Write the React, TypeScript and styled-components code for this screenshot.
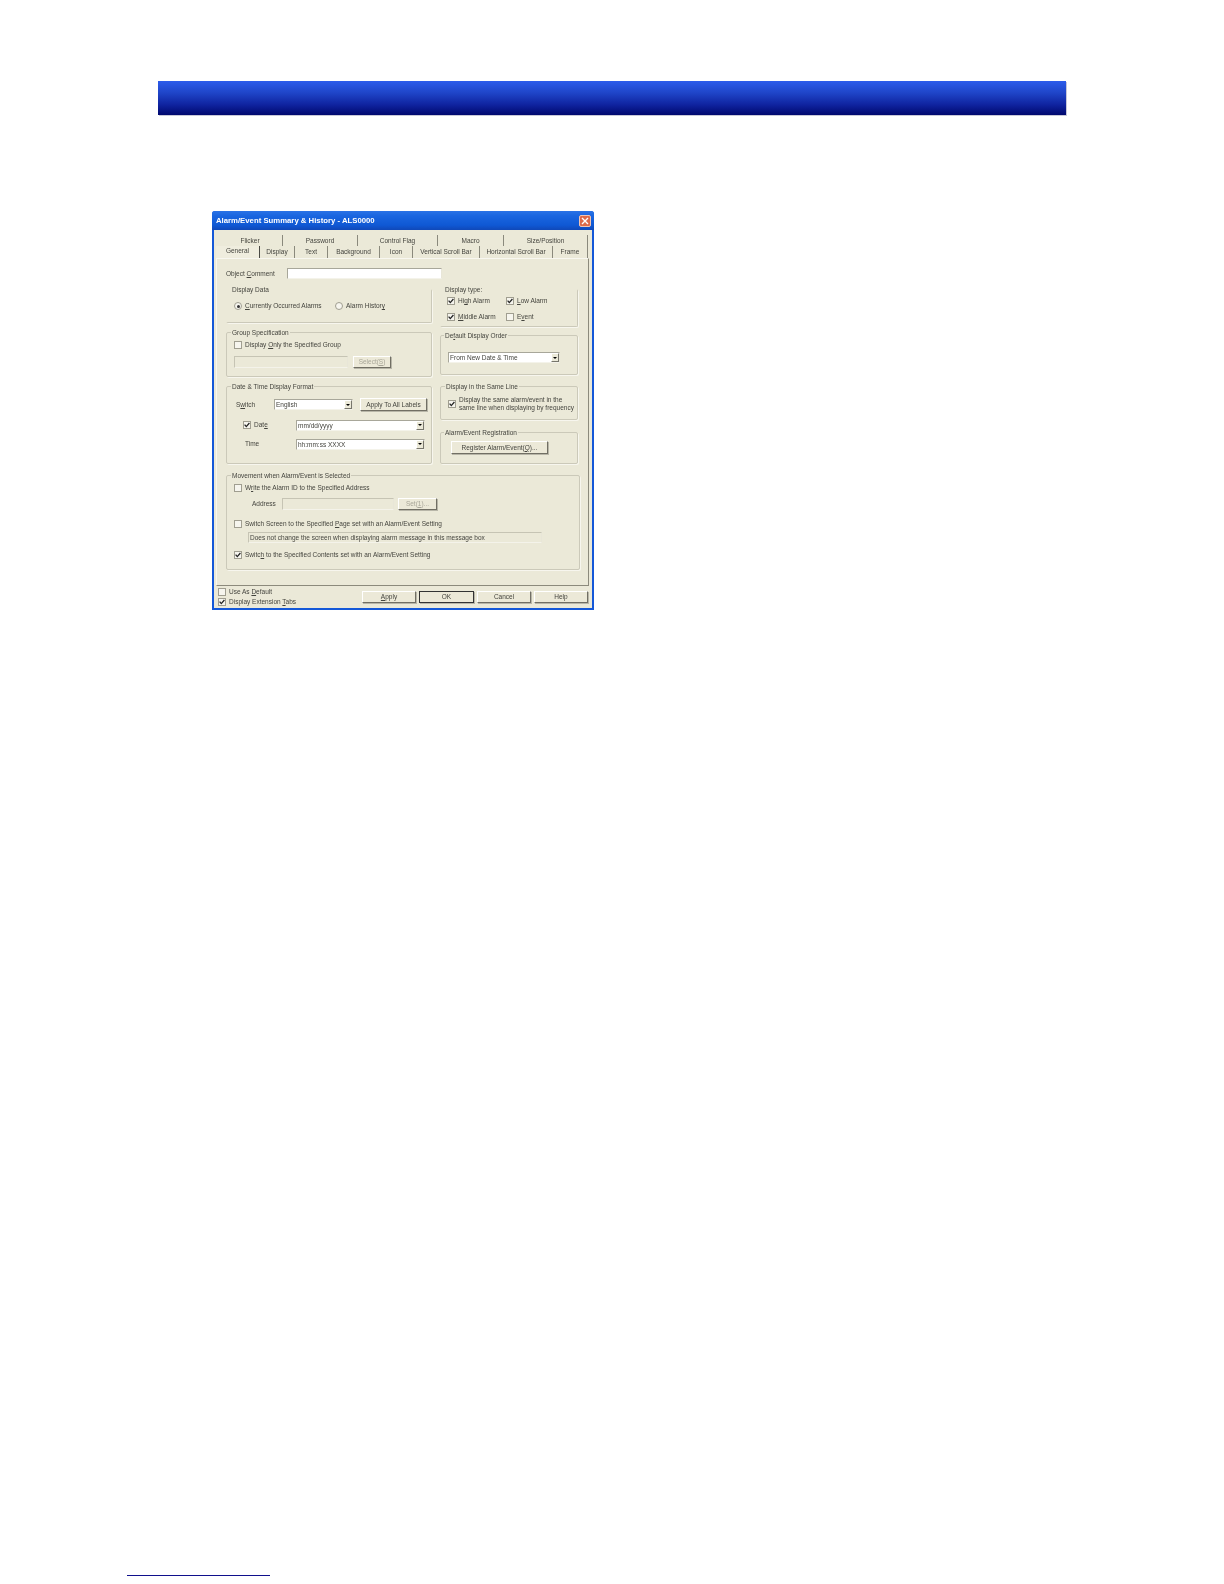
import React from "react";
import styled, { createGlobalStyle } from "styled-components";

const Global = createGlobalStyle`
  html, body { margin: 0; padding: 0; background: #fff; }
  * { box-sizing: border-box; }
`;

const Page = styled.div`
  width: 1224px; height: 1584px; display: flex; flex-direction: column; background: #fff;
  font-family: "Liberation Sans", Arial, sans-serif;
`;
const Banner = styled.div`
  width: 908px; height: 34px; margin: 81px 0 0 158px; flex: none;
  background: linear-gradient(#2c5ceb 0%, #1f45c8 35%, #0f239f 70%, #00086e 100%);
  box-shadow: 1px 1px 0 #c8c8d8;
`;
const Dialog = styled.div`
  width: 382px; height: 399px; margin: 96px 0 0 212px; flex: none;
  display: flex; flex-direction: column;
  background: #1458d8; border-radius: 3px 3px 0 0; padding: 0 2px 2px;
  filter: blur(0.45px);
  font-size: 6.5px; color: #44443e; line-height: 10px;
`;
const TitleBar = styled.div`
  height: 19px; margin: 0 -2px; padding: 0 3px 0 4px; display: flex; align-items: center; justify-content: space-between;
  background: linear-gradient(#2a72e6, #1a66e0 25%, #0f58d4 75%, #1048b8);
  border-radius: 3px 3px 0 0; color: #fff; font-weight: 700; font-size: 7.75px;
`;
const Close = styled.div`
  width: 12px; height: 12px; background: #dd6a48; border: 1px solid #f2c4b2; border-radius: 2px;
  display: flex; align-items: center; justify-content: center;
`;
const Body = styled.div`
  flex: 1; background: #ebe9d8; padding: 5px 3px 0 2px; display: flex; flex-direction: column; min-height: 0;
`;
const TabRow = styled.div<{ $indent: number; $h: number }>`
  display: flex; height: ${p => p.$h}px; flex: none; padding-left: ${p => p.$indent}px; align-items: center;
`;
const Tab = styled.div<{ $w: number; $active?: boolean }>`
  width: ${p => p.$w}px; height: 100%; text-align: center; line-height: 11px; white-space: nowrap;
  border-right: 1px solid ${p => (p.$active ? "#4a4a44" : "#8a897c")};
  ${p => p.$active && "background:#efedde; line-height: 9px;"}
`;
const Panel = styled.div`
  width: 373px; height: 328px; flex: none; border: 1px solid #f8f7f0; border-right-color: #8c8a7c; border-bottom-color: #8c8a7c;
  background: #ebe9d8; padding: 9px 0 0 9px; display: flex; flex-direction: column;
`;
const CommentRow = styled.div`
  display: flex; align-items: center; height: 11px; flex: none;
`;
const LabelCell = styled.span<{ $w: number; $pad?: number }>`
  width: ${p => p.$w}px; padding-left: ${p => p.$pad ?? 0}px; flex: none; white-space: nowrap;
`;
const Field = styled.div<{ $w: number; $h?: number; $off?: boolean; $ml?: number }>`
  width: ${p => p.$w}px; height: ${p => p.$h ?? 11}px; flex: none; overflow: hidden; white-space: nowrap;
  margin-left: ${p => p.$ml ?? 0}px;
  background: ${p => (p.$off ? "#ebe9d8" : "#fff")};
  border: 1px solid ${p => (p.$off ? "#c6c4b4" : "#a8a79a")};
  border-right-color: #e8e6d8; border-bottom-color: #f4f3ea;
  padding-left: 1px; line-height: 9px;
  display: flex; justify-content: space-between; align-items: center;
`;
const Arrow = styled.span`
  width: 8px; height: 9px; flex: none; background: #ebe9d8; border: 1px solid #fff; border-right-color: #77766c; border-bottom-color: #77766c;
  display: flex; align-items: center; justify-content: center;
  &::after { content: ""; border: 2px solid transparent; border-top: 2.5px solid #000; border-bottom: 0; }
`;
const Columns = styled.div`
  display: flex; gap: 8px; margin-top: 6px; flex: none;
`;
const Column = styled.div<{ $w: number }>`
  width: ${p => p.$w}px; display: flex; flex-direction: column;
`;
const Group = styled.fieldset<{ $h: number; $mt?: number; $w?: number; $pt?: number; $pl?: number; $open?: boolean }>`
  margin: ${p => p.$mt ?? 0}px 0 0 0; min-width: 0; height: ${p => p.$h}px; flex: none; ${p => p.$w && `width:${p.$w}px;`}
  border: 1px solid #cbc9b9; border-radius: 2px;
  ${p => p.$open && "border-top-color: transparent; border-left-color: transparent;"}
  box-shadow: 1px 1px 0 #f7f6ee;
  padding: ${p => p.$pt ?? 3}px 0 0 ${p => p.$pl ?? 7}px;
  display: flex; flex-direction: column;
`;
const Legend = styled.legend<{ $ml?: number }>`
  margin-left: ${p => p.$ml ?? -3}px; padding: 0 1px; line-height: 9px; font-size: 6.5px; white-space: nowrap;
`;
const Row = styled.div<{ $mt?: number; $h?: number; $gap?: number }>`
  display: flex; align-items: center; gap: ${p => p.$gap ?? 0}px; margin-top: ${p => p.$mt ?? 0}px; min-height: ${p => p.$h ?? 10}px; white-space: nowrap;
`;
const Box = styled.span<{ $off?: boolean; $round?: boolean }>`
  width: 8px; height: 8px; flex: none; margin-right: 3px; display: inline-flex; align-items: center; justify-content: center;
  background: ${p => (p.$off ? "#f0eee0" : "#f6f5ee")};
  border: 1px solid ${p => (p.$off ? "#c6c4b4" : "#a09e90")};
  border-radius: ${p => (p.$round ? "50%" : "0")};
`;
const Dot = styled.span`
  width: 3px; height: 3px; border-radius: 50%; background: #333;
`;
const Check: React.FC<{ on?: boolean; off?: boolean }> = ({ on, off }) => (
  <Box $off={off}>
    {on && (
      <svg width="6" height="6" viewBox="0 0 6 6">
        <path d="M0.6 2.6 L2.3 4.6 L5.4 1" fill="none" stroke="#222" strokeWidth="1.3" />
      </svg>
    )}
  </Box>
);
const Radio: React.FC<{ on?: boolean }> = ({ on }) => <Box $round>{on && <Dot />}</Box>;
const Choice = styled.span<{ $w?: number }>`
  display: inline-flex; align-items: center; white-space: nowrap;
  ${p => p.$w && `width:${p.$w}px;`}
`;
const Btn = styled.div<{ $w: number; $h?: number; $off?: boolean; $def?: boolean; $ml?: number }>`
  width: ${p => p.$w}px; height: ${p => p.$h ?? 13}px; flex: none; margin-left: ${p => p.$ml ?? 0}px;
  display: flex; align-items: center; justify-content: center; white-space: nowrap;
  background: #ece9d8; color: ${p => (p.$off ? "#a8a698" : "inherit")};
  border: 1px solid ${p => (p.$def ? "#333" : "#fff")};
  border-right-color: ${p => (p.$def ? "#333" : "#716f64")}; border-bottom-color: ${p => (p.$def ? "#333" : "#716f64")};
  box-shadow: 1px 1px 0 #b8b6a8;
`;
const TwoLines = styled.div`
  line-height: 8px; white-space: nowrap;
`;
const Footer = styled.div`
  flex: 1; display: flex; justify-content: space-between; padding-right: 1px;
`;
const Defaults = styled.div`
  display: flex; flex-direction: column; padding: 1px 0 0 2px;
`;
const Actions = styled.div`
  display: flex; gap: 3px; padding-top: 5px;
`;
const Rule = styled.div`
  width: 143px; height: 1px; margin: auto 0 8px 127px; background: #10108c;
`;

const row1: [string, number][] = [["Flicker", 65], ["Password", 75], ["Control Flag", 80], ["Macro", 66], ["Size/Position", 84]];
const row2: [string, number][] = [["General", 44], ["Display", 35], ["Text", 33], ["Background", 52], ["Icon", 33], ["Vertical Scroll Bar", 67], ["Horizontal Scroll Bar", 73], ["Frame", 35]];

export default function App() {
  return (
    <Page>
      <Global />
      <Banner />
      <Dialog>
        <TitleBar>
          <span>Alarm/Event Summary &amp; History - ALS0000</span>
          <Close>
            <svg width="8" height="8" viewBox="0 0 8 8">
              <path d="M1 1 L7 7 M7 1 L1 7" stroke="#fff" strokeWidth="1.4" />
            </svg>
          </Close>
        </TitleBar>
        <Body>
          <TabRow $indent={2} $h={11}>
            {row1.map(([t, w]) => <Tab key={t} $w={w}>{t}</Tab>)}
          </TabRow>
          <TabRow $indent={0} $h={12}>
            {row2.map(([t, w], i) => <Tab key={t} $w={w} $active={i === 0}>{t}</Tab>)}
          </TabRow>
          <Panel>
            <CommentRow>
              <LabelCell $w={61}>Object <u>C</u>omment</LabelCell>
              <Field $w={155} />
            </CommentRow>
            <Columns>
              <Column $w={206}>
                <Group $h={38} $pt={7} $open>
                  <Legend>Display Data</Legend>
                  <Row>
                    <Choice $w={101}><Radio on /><span><u>C</u>urrently Occurred Alarms</span></Choice>
                    <Choice><Radio /><span>Alarm Histor<u>y</u></span></Choice>
                  </Row>
                </Group>
                <Group $h={49} $mt={5}>
                  <Legend>Group Specification</Legend>
                  <Row><Check /><span>Display <u>O</u>nly the Specified Group</span></Row>
                  <Row $gap={5} $mt={6} $h={12}>
                    <Field $w={114} $h={12} $off />
                    <Btn $w={38} $h={12} $off>Select(<u>S</u>)</Btn>
                  </Row>
                </Group>
                <Group $h={82} $mt={5} $pt={7}>
                  <Legend>Date &amp; Time Display Format</Legend>
                  <Row $h={13}>
                    <LabelCell $w={40} $pad={2}>S<u>w</u>itch</LabelCell>
                    <Field $w={79}>English<Arrow /></Field>
                    <Btn $w={67} $ml={7}>Apply To All Labels</Btn>
                  </Row>
                  <Row $mt={8} $h={12}>
                    <LabelCell $w={62} $pad={9}><Choice><Check on /><span>Dat<u>e</u></span></Choice></LabelCell>
                    <Field $w={129}>mm/dd/yyyy<Arrow /></Field>
                  </Row>
                  <Row $mt={7} $h={12}>
                    <LabelCell $w={62} $pad={11}>Time</LabelCell>
                    <Field $w={129}>hh:mm:ss XXXX<Arrow /></Field>
                  </Row>
                </Group>
              </Column>
              <Column $w={138}>
                <Group $h={42} $pt={2} $pl={6} $open>
                  <Legend $ml={-3}>Display type:</Legend>
                  <Row>
                    <Choice $w={59}><Check on /><span>Hi<u>g</u>h Alarm</span></Choice>
                    <Choice><Check on /><span><u>L</u>ow Alarm</span></Choice>
                  </Row>
                  <Row $mt={6}>
                    <Choice $w={59}><Check on /><span><u>M</u>iddle Alarm</span></Choice>
                    <Choice><Check /><span>E<u>v</u>ent</span></Choice>
                  </Row>
                </Group>
                <Group $h={44} $mt={4} $pt={12}>
                  <Legend $ml={-4}>De<u>f</u>ault Display Order</Legend>
                  <Field $w={112}>From New Date &amp; Time<Arrow /></Field>
                </Group>
                <Group $h={38} $mt={7} $pt={5} $pl={7}>
                  <Legend $ml={-3}>Display in the Same Line</Legend>
                  <Row>
                    <Check on />
                    <TwoLines>Display the same alarm/event in the<br />same line when displaying by frequency</TwoLines>
                  </Row>
                </Group>
                <Group $h={36} $mt={8} $pt={4} $pl={10}>
                  <Legend $ml={-7}>Alarm/Event Registration</Legend>
                  <Btn $w={97}>Register Alarm/Event(<u>Q</u>)...</Btn>
                </Group>
              </Column>
            </Columns>
            <Group $h={99} $w={354} $mt={7}>
              <Legend>Movement when Alarm/Event is Selected</Legend>
              <Row><Check /><span>W<u>r</u>ite the Alarm ID to the Specified Address</span></Row>
              <Row $mt={5} $h={12}>
                <LabelCell $w={48} $pad={18}>Address</LabelCell>
                <Field $w={112} $h={12} $off />
                <Btn $w={39} $h={12} $off $ml={4}>Set(<u>1</u>)...</Btn>
              </Row>
              <Row $mt={9}><Check /><span>Switch Screen to the Specified <u>P</u>age set with an Alarm/Event Setting</span></Row>
              <Row $mt={3} $h={11}>
                <Field $w={294} $off $ml={14}>Does not change the screen when displaying alarm message in this message box</Field>
              </Row>
              <Row $mt={7}><Check on /><span>Switc<u>h</u> to the Specified Contents set with an Alarm/Event Setting</span></Row>
            </Group>
          </Panel>
          <Footer>
            <Defaults>
              <Row><Check /><span>Use As <u>D</u>efault</span></Row>
              <Row><Check on /><span>Display Extension <u>T</u>abs</span></Row>
            </Defaults>
            <Actions>
              <Btn $w={54} $h={12}><u>A</u>pply</Btn>
              <Btn $w={55} $h={12} $def>OK</Btn>
              <Btn $w={54} $h={12}>Cancel</Btn>
              <Btn $w={54} $h={12}>Help</Btn>
            </Actions>
          </Footer>
        </Body>
      </Dialog>
      <Rule />
    </Page>
  );
}
